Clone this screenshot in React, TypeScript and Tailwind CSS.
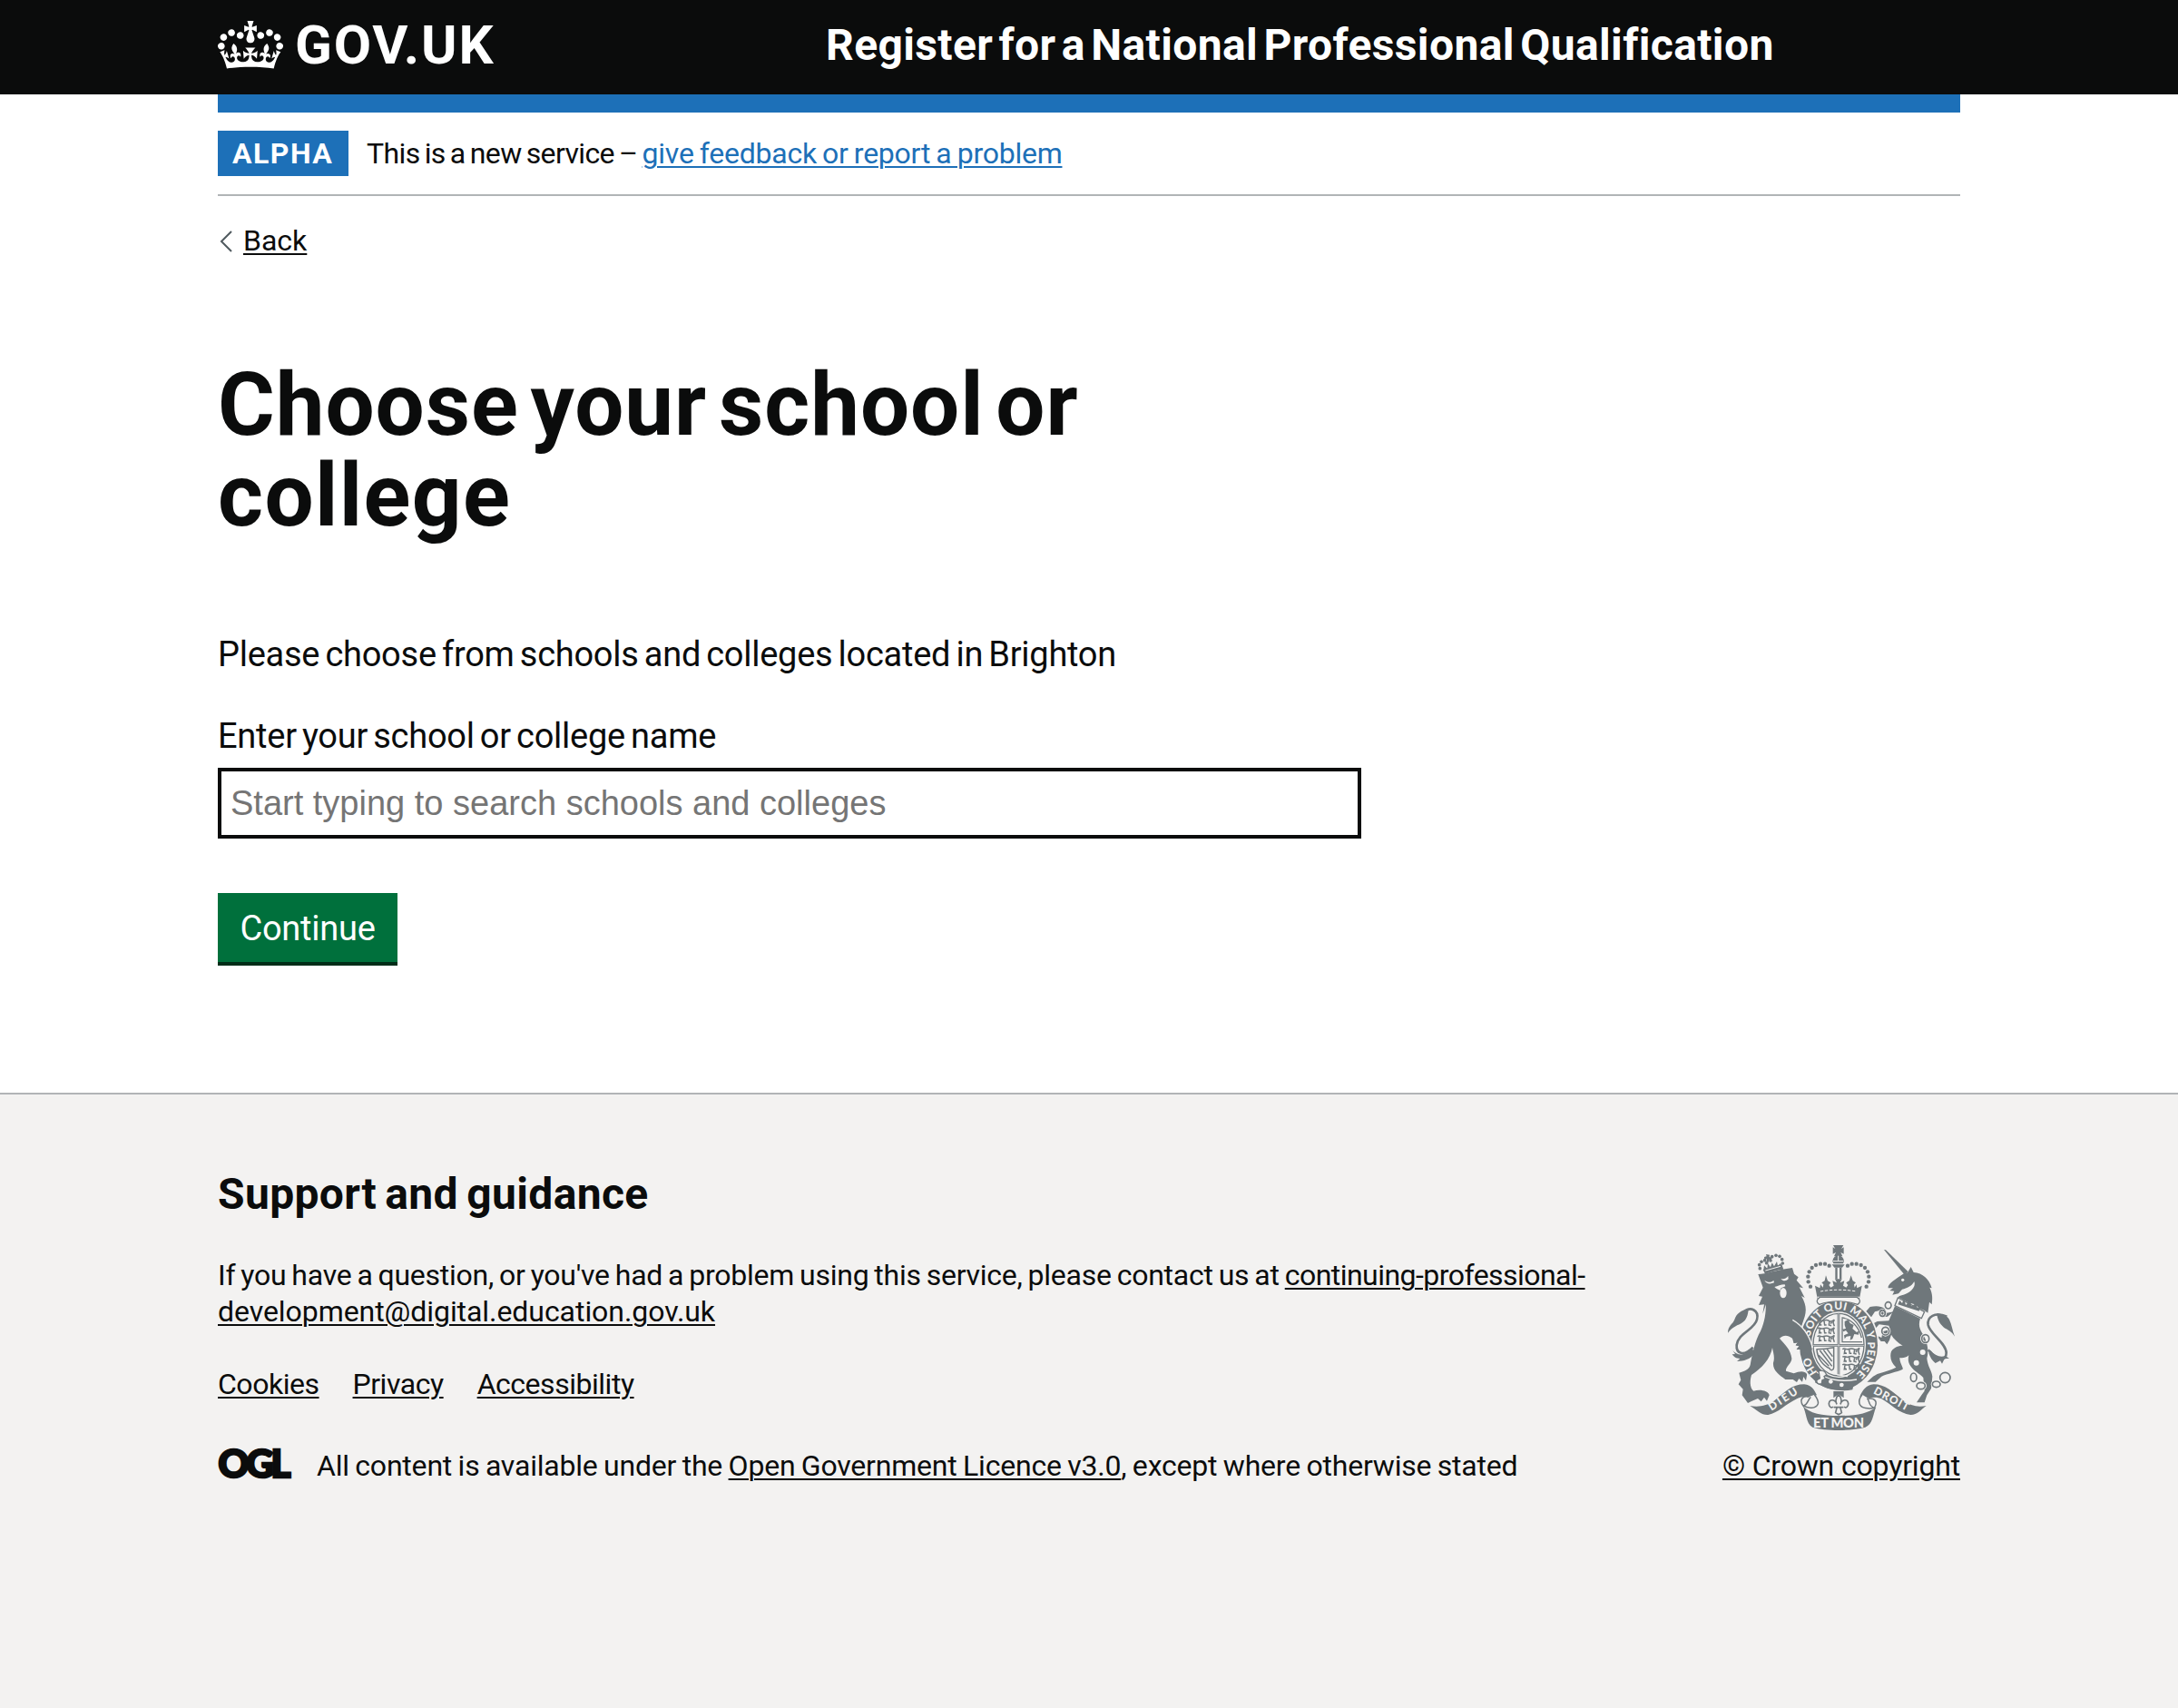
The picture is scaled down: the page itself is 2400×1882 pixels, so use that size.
import type { ReactNode } from "react";

const link = "underline decoration-2 underline-offset-[3px]";

function Crown() {
  return (
    <svg viewBox="0 0 132 97" className="mt-[3px] h-[53px] w-[72px] shrink-0 fill-white" aria-hidden="true">
      <path
        fillRule="evenodd"
        d="M25 30.2c3.5 1.5 7.7-.2 9.1-3.7 1.5-3.6-.2-7.8-3.9-9.2-3.6-1.4-7.6.3-9.1 3.9-1.4 3.5.3 7.5 3.9 9zM9 39.5c3.6 1.5 7.8-.2 9.2-3.7 1.5-3.6-.2-7.8-3.9-9.1-3.6-1.5-7.6.2-9.1 3.8-1.4 3.5.3 7.5 3.8 9zM4.4 57.2c3.5 1.5 7.7-.2 9.1-3.8 1.5-3.6-.2-7.7-3.9-9.1-3.5-1.5-7.6.3-9.1 3.8-1.4 3.5.3 7.6 3.9 9.1zm38.3-21.4c3.5 1.5 7.7-.2 9.1-3.8 1.5-3.6-.2-7.7-3.9-9.1-3.6-1.5-7.6.3-9.1 3.8-1.3 3.6.4 7.7 3.9 9.1zm64.4-5.6c-3.6 1.5-7.8-.2-9.1-3.7-1.5-3.6.2-7.8 3.8-9.2 3.6-1.4 7.7.3 9.2 3.9 1.3 3.5-.4 7.5-3.9 9zm15.9 9.3c-3.6 1.5-7.7-.2-9.1-3.7-1.5-3.6.2-7.8 3.7-9.1 3.6-1.5 7.7.2 9.2 3.8 1.5 3.5-.3 7.5-3.8 9zm4.7 17.7c-3.6 1.5-7.8-.2-9.2-3.8-1.5-3.6.2-7.7 3.9-9.1 3.6-1.5 7.7.3 9.2 3.8 1.3 3.5-.4 7.6-3.9 9.1zM89.3 35.8c-3.6 1.5-7.8-.2-9.2-3.8-1.4-3.6.2-7.7 3.9-9.1 3.6-1.5 7.7.3 9.2 3.8 1.4 3.6-.3 7.7-3.9 9.1zM69.7 17.7l8.9 4.7V9.3l-8.9 2.8c-.2-.3-.5-.6-.9-.9L72.4 0H59.6l3.5 11.2c-.3.3-.6.5-.9.9l-8.8-2.8v13.1l8.8-4.7c.3.3.6.7.9.9l-5 15.4v.1c-.2.8-.4 1.6-.4 2.4 0 4.1 3.1 7.5 7 8.1h.2c.3 0 .7.1 1 .1.4 0 .7 0 1-.1h.2c4-.6 7.1-4.1 7.1-8.1 0-.8-.1-1.7-.4-2.4V34l-5.1-15.4c.4-.2.7-.6 1-.9zM66 92.8c16.9 0 32.8 1.1 47.1 3.2 4-16.9 8.9-26.7 14-33.5l-9.6-3.4c1 4.9 1.1 7.2 0 10.2-1.5-1.4-3-4.3-4.2-8.7L108.6 76c2.8-2 5-3.2 7.5-3.3-4.4 9.4-10 11.9-13.6 11.2-4.3-.8-6.3-4.6-5.6-7.9 1-4.7 5.7-5.9 8-.5 4.3-8.7-3-11.4-7.6-8.8 7.1-7.2 7.9-13.5 2.1-21.1-8 6.1-8.1 12.3-4.5 20.8-4.7-5.4-12.1-2.5-9.5 6.2 3.4-5.2 7.9-2 7.2 3.1-.6 4.3-6.4 7.8-13.5 7.2-10.3-.9-10.9-8-11.2-13.8 2.5-.5 7.1 1.8 11 7.3L80.2 60c-4.1 4.4-8 5.3-12.3 5.4 1.4-4.4 8-11.6 8-11.6H55.5s6.4 7.2 7.9 11.6c-4.2-.1-8-1-12.3-5.4l1.4 16.4c3.9-5.5 8.5-7.7 10.9-7.3-.3 5.8-.9 12.8-11.1 13.8-7.2.6-12.9-2.9-13.5-7.2-.7-5 3.8-8.3 7.1-3.1 2.7-8.7-4.6-11.6-9.4-6.2 3.7-8.5 3.6-14.7-4.6-20.8-5.8 7.6-5 13.9 2.2 21.1-4.7-2.6-11.9.1-7.7 8.8 2.3-5.5 7.1-4.2 8.1.5.7 3.3-1.3 7.1-5.7 7.9-3.5.7-9-1.8-13.5-11.2 2.5.1 4.7 1.3 7.5 3.3l-4.7-15.4c-1.2 4.4-2.7 7.2-4.3 8.7-1.1-3-.9-5.3 0-10.2l-9.5 3.4c5 6.9 9.9 16.7 14 33.5 14.8-2.1 30.8-3.2 47.7-3.2z"
      />
    </svg>
  );
}

const archBeads: [number, number][] = [
  [345, 203], [338, 187], [337, 170], [341, 154], [350, 141], [363, 132], [378, 128], [393, 128], [407, 134],
];

const chainLinks: [number, number, number, number][] = [
  [602, 265, 10, 11], [583, 291, 9, 10], [593, 350, 12, 13], [725, 375, 12, 13], [686, 503, 10, 14],
  [710, 531, 14, 11], [761, 526, 13, 10], [790, 504, 17, 17],
];

function Lions({ x, y }: { x: number; y: number }) {
  return (
    <g transform={`translate(${x} ${y})`} fill="none" stroke="#6f777b" strokeWidth="4.5">
      {[0, 26, 52].map((dy) => (
        <path key={dy} d={`M2 ${dy + 4}c6 -6 12 2 18 0s14 -4 20 0 12 2 18 -4M10 ${dy + 4}l-2 14 6 -2M24 ${dy + 4}l2 14h6M42 ${dy + 4}l-2 14 8 2M58 ${dy}l-4 10 4 12M8 ${dy + 18}h8M50 ${dy + 8}l-4 6`} />
      ))}
    </g>
  );
}

function CoatOfArms() {
  const ink = "#6f777b";
  const paper = "#f3f2f1";
  return (
    <svg viewBox="72 66 750 612" className="h-[204px] w-[250px]" fill={ink} aria-hidden="true">
      {/* Lion's crown */}
      <path d="M188 147l62 -18 6 17c-22 2 -44 8 -60 17z" />
      <path d="M190 147l2 -14 10 10 2 -16 9 12 5 -15 7 12 9 -16 3 14 10 -9 2 13-56 16z" />
      {[[178, 143], [176, 131], [183, 121], [194, 116], [218, 104], [231, 100], [243, 103], [251, 113], [253, 126], [213, 117], [200, 125]].map(([x, y]) => (
        <circle key={`${x}-${y}`} cx={x} cy={y} r="5.5" />
      ))}
      <path d="M198 96l12 2 -1 7 9 2 -3 9 -7 -3 -2 10 -6 -1 1 -10 -8 2 -1 -9 8 -2z" />
      <path d="M196 150l50 -14" stroke={paper} strokeWidth="3" fill="none" />

      {/* Lion */}
      <path d="M172 162C196 162 232 148 285 141L291 161 305 172 299 182 321 208 308 205 326 240 315 234C331 262 332 280 326 302L316 332C335 348 345 378 349 408L338 427 326 418 318 428 312 411 299 411 307 400 296 397 303 388 290 390 285 374C270 362 255 362 243 374C262 396 280 412 283 440C284 456 262 468 264 482L290 490C308 482 325 480 334 492L330 514 322 501 318 518 307 507 300 519 287 510 262 510C240 494 220 480 222 455 228 438 222 422 219 405 212 442 185 472 150 495 143 520 146 540 157 548 180 541 206 548 209 562L201 581 192 569 182 583 171 573 150 582 138 588 119 562 122 542 107 526 115 512 109 488C128 482 142 478 146 462C152 428 162 380 180 350 195 318 197 290 198 262L187 293 192 262 174 264 186 236 174 234 188 206 180 184z" />
      <path d="M72 356c0 -24 16 -28 22 -44 6 -20 22 -32 46 -34 -2 20 -6 34 -20 44 -14 10 -32 12 -48 34z" />
      <path d="M122 288c26 -22 54 -6 46 24 -8 34 -62 44 -67 84 -2 28 22 40 54 8" fill="none" stroke={ink} strokeWidth="8" />
      <path d="M88 414c18 20 42 18 64 -10l8 20c-14 20 -36 26 -58 26l10 -9c-14 0 -20 -6 -26 -14l10 -1z" />
      <g fill={paper}>
        <path d="M193 182c12 8 22 8 30 0l2 8c-14 6 -26 4 -32 -8zM247 176c8 4 16 2 24 -8l1 10c-8 8 -18 8 -25 -2z" />
        <path d="M226 204c12 -2 20 -8 34 -8l2 6 -14 6 -4 8c-4 -4 -12 -4 -18 -12z" />
        <ellipse cx="255" cy="224" rx="11" ry="17" />
        <path d="M262 378l14 8 4 12 12 -6 -8 14z" />
      </g>

      {/* Imperial crown */}
      <path d="M420 66h34l-7 12 8 -5v22l-10 -5 6 13h-28l6 -13 -10 5V73l8 5z" />
      <path d="M418 119a19 19 0 0 1 38 0l-3 8h-32zM416 130h42l-8 10h-26z" />
      <path d="M437 101v18M420 119h34" stroke={paper} strokeWidth="3" />
      {archBeads.map(([x, y]) => (
        <g key={`${x}-${y}`}>
          <circle cx={x} cy={y} r="6.5" />
          <circle cx={875 - x} cy={y} r="6.5" />
        </g>
      ))}
      <path d="M427 140h7v38h-7zM441 140h7v38h-7z" />
      <path d="M368 243L360 200 376 208 378 196 386 206 388 196 382 190 392 184 396 166 402 184 412 190 406 198 412 206 422 200 418 184 432 190 426 178H449L443 190 457 184 453 200 463 206 469 198 463 190 473 184 479 166 485 184 495 190 489 196 491 206 497 196 499 208 515 200 507 243z" />
      <path d="M378 219c36 -7 84 -7 119 0" fill="none" stroke={paper} strokeWidth="3" strokeDasharray="10 5" />

      {/* Unicorn */}
      <path d="M588 81l6 1 74 72 -12 10z" />
      <path d="M654 160L666 157 677 138 686 156C716 158 738 178 746 208L739 206C750 228 748 246 746 262L738 254 733 290 722 282 706 276 690 262 668 256 634 238C642 230 660 232 678 216 688 206 692 196 688 186 680 202 664 208 648 212L636 226 616 230 622 218 607 216 618 208 602 208C598 196 626 178 654 160z" />
      <circle cx="650" cy="181" r="5" fill={paper} />
      <path d="M634 240L722 286 712 308 624 266z" fill={paper} stroke={ink} strokeWidth="4" />
      <path d="M634 262l6 -14 8 10 6 -16 6 22 8 -8 8 -8 2 20 10 -6 10 -8 -2 20 12 -4 -4 14z" />
      <path d="M624 268L708 309C702 326 704 340 714 356C730 380 738 412 730 440 732 466 746 480 748 500L744 540 730 562 722 586H696L712 562 722 548 718 504C702 488 688 484 676 466 666 452 668 440 670 430 660 440 646 440 640 438 640 458 652 468 650 476 630 486 600 490 580 500L560 518H532L552 500 566 492C590 484 612 478 628 470 612 456 606 436 612 418 620 402 640 398 650 398 634 388 620 376 612 362L606 380 598 394 590 384 578 384 562 364 580 372 584 352 608 344 604 332 572 328 556 346 542 344 550 326 566 318 604 316z" />
      <path d="M620 286L600 302 584 304 574 282 558 286 546 304 528 286 542 270C560 266 578 266 590 276L598 290z" />
      <circle cx="716" cy="420" r="9" fill={paper} />
      <circle cx="695" cy="455" r="9" fill={paper} />
      <path d="M822 368c-8 -20 -10 -40 -18 -56 -8 -14 -24 -20 -42 -20 4 22 10 34 24 46 12 8 26 12 36 30z" />
      <path d="M796 302c-40 -16 -66 0 -62 28 6 30 60 60 60 92 0 26 -24 30 -60 -10" fill="none" stroke={ink} strokeWidth="8" />
      <path d="M742 414c14 18 34 24 48 18l14 8 -16 2 -8 16 -6 -10 -16 8c-10 -8 -18 -20 -22 -34z" />
      <g fill="none" stroke={ink} strokeWidth="5">
        {chainLinks.map(([cx, cy, rx, ry]) => (
          <g key={`${cx}-${cy}`}>
            <ellipse cx={cx} cy={cy} rx={rx} ry={ry} stroke={paper} strokeWidth="10" />
            <ellipse cx={cx} cy={cy} rx={rx} ry={ry} />
          </g>
        ))}
      </g>

      {/* Garter */}
      <ellipse cx="438" cy="397" rx="134" ry="153" fill={paper} />
      <ellipse cx="438" cy="397" rx="129" ry="148" />
      <ellipse cx="438" cy="395" rx="90" ry="109" fill={paper} />
      <ellipse cx="438" cy="395" rx="84" ry="103" fill="none" stroke={ink} strokeWidth="4" />
      <path d="M366 236h143l-14 16c-36 -8 -80 -8 -115 0z" fill={paper} />
      <path d="M376 238h123c12 8 12 18 2 24c-40 -14 -88 -14 -127 0c-10 -6 -10 -16 2 -24z" fill={paper} stroke={ink} strokeWidth="4" />
      <path id="garter" d="M392 508A97 117 0 0 1 341 395A97 117 0 0 1 438 279A97 117 0 0 1 535 395A97 117 0 0 1 470 508" fill="none" />
      <text fill={paper} fontFamily="Lato" fontWeight="900" fontSize="36">
        <textPath href="#garter" startOffset="32">
          HO
          <tspan dx="68" letterSpacing="1.2">SOIT QUI MAL Y PENSE</tspan>
        </textPath>
      </text>
      <path d="M438 292v206M354 397h168" stroke={ink} strokeWidth="8" />
      <path d="M438 292v206M354 397h168" stroke={paper} strokeWidth="2" />
      <g>
        <Lions x={366} y={312} />
        <Lions x={449} y={406} />
        <path d="M450 304v82h66M448 306c30 2 58 30 66 66" fill="none" stroke={ink} strokeWidth="4" />
        <path d="M458 318l12 -6 6 12 12 6 -4 12 14 12 8 -6 -2 14 -14 -2 -6 16 -8 4 2 -14 -14 2 -6 8 -2 -12 14 -6 -8 -10 -8 4 -4 -8 12 -2 -4 -12z" />
        <path d="M364 410c14 0 40 -2 58 -6v66c0 10 -10 12 -14 4M366 412c2 26 18 52 44 62M376 414l40 52M388 412l28 38M400 410l18 24M372 430l34 36" fill="none" stroke={ink} strokeWidth="4.5" />
      </g>
      <path d="M290 320C322 332 342 368 350 410L338 430 326 420 318 430 312 411 299 411 307 400 296 397 303 388 290 390z" />
      <path d="M286 313c34 20 56 52 66 92" fill="none" stroke={paper} strokeWidth="4" />

      {/* Belt and buckle */}
      <path d="M366 490c36 22 70 34 124 28l-6 26c-44 8 -90 -4 -124 -24z" />
      <path d="M366 486c36 24 74 34 132 24M432 494l36 6" fill="none" stroke={paper} strokeWidth="4" />
      <circle cx="412" cy="517" r="7" fill={paper} />
      <circle cx="448" cy="528" r="7" fill={paper} />
      <path d="M372 482c12 -4 22 2 26 12l-8 6 4 8 -10 4 -2 12c-12 4 -18 -4 -16 -12l10 -6 -2 -12z" fill={paper} stroke={ink} strokeWidth="4" />

      {/* Fleur-de-lis */}
      <path d="M421 549h34v22l-17 -12 -17 12z" />
      <path d="M438 560c10 10 12 20 6 32 4 -16 24 -20 26 -2 0 10 -8 16 -14 10M438 560c-10 10 -12 20 -6 32 -4 -16 -24 -20 -26 -2 0 10 8 16 14 10M422 602h32M432 604l-4 16 10 6 10 -6 -4 -16" fill="none" stroke={ink} strokeWidth="5" />

      {/* Motto ribbon */}
      <path d="M145 597C172 602 202 598 226 580 262 550 284 526 324 526 350 528 358 546 366 562L340 568C326 566 312 568 300 574 262 592 240 620 205 627 182 628 172 614 145 597z" />
      <path d="M728 597C700 602 676 598 652 580 616 550 592 526 554 526 528 528 518 546 508 566L536 572C552 568 568 568 580 574 612 592 636 622 676 627 700 626 708 612 728 597z" />
      <path d="M340 568C318 562 308 578 320 596 336 606 364 608 370 590 372 580 366 570 358 560M346 568c-10 8 -8 24 -26 30" fill={paper} stroke={ink} strokeWidth="4.5" />
      <path d="M536 572C560 572 568 584 556 604 540 608 512 606 507 590 504 580 508 570 516 560M532 572c10 8 2 24 24 32" fill={paper} stroke={ink} strokeWidth="4.5" />
      <path d="M318 594C340 624 386 630 438 630 490 630 538 624 562 600 550 632 552 656 526 668 480 681 396 681 352 668 328 654 334 622 318 594z" />
      <g fill={paper} fontFamily="Lato" fontWeight="900" fontSize="44">
        <text x="354" y="669" textLength="168">ET MON</text>
        <text transform="translate(216 614) rotate(-33)" fontSize="36" textLength="106">DIEU</text>
        <text transform="translate(551 555) rotate(28)" fontSize="36" textLength="126">DROIT</text>
      </g>
    </svg>
  );
}

function OglLogo() {
  return (
    <svg viewBox="0 0 82 34" className="mt-px h-[34px] w-[82px] shrink-0 overflow-visible" role="img" aria-label="OGL">
      <text
        x="0.5"
        y="32"
        fontFamily="Lato"
        fontWeight="900"
        fontSize="42"
        textLength="80"
        lengthAdjust="spacing"
        fill="#0b0c0c"
        stroke="#0b0c0c"
        strokeWidth="2.6"
      >
        OGL
      </text>
    </svg>
  );
}

function FooterLink({ children }: { children: ReactNode }) {
  return <a className={link}>{children}</a>;
}

export default function App() {
  return (
    <div className="flex min-h-[1882px] flex-col bg-white font-['Roboto',sans-serif] text-[32px] leading-10 text-[#0b0c0c]">
      <header className="bg-[#0b0c0c]">
        <div className="mx-auto flex h-[104px] w-[1920px] items-start pt-5 text-white">
          <a className="flex w-[670px] items-start gap-[13px]">
            <Crown />
            <span className="text-[60px] leading-[60px] font-bold tracking-[1.8px]">GOV.UK</span>
          </a>
          <a className="text-5xl leading-[60px] font-bold tracking-[0.38px] [word-spacing:-6px]">
            Register for a National Professional Qualification
          </a>
        </div>
      </header>

      <div className="mx-auto w-[1920px]">
        <div className="h-5 bg-[#1d70b8]" />
        <div className="flex gap-5 border-b-2 border-[#b1b4b6] py-5 leading-[50px]">
          <strong className="w-36 bg-[#1d70b8] pl-4 font-bold tracking-[1.5px] text-white">ALPHA</strong>
          <p className="tracking-[-0.62px] [word-spacing:-2.2px]">
            This is a new service –{" "}
            <a className="tracking-[-0.25px] [word-spacing:-1.5px] text-[#1d70b8] underline decoration-2 underline-offset-[3px]">
              give feedback or report a problem
            </a>
          </p>
        </div>

        <a className="mt-[29px] flex items-start">
          <svg viewBox="0 0 14 24" className="mt-[9px] mr-[12px] ml-[2px] h-6 w-3.5" fill="none" stroke="#505a5f" strokeWidth="2">
            <path d="M13 1 2 12l11 11" />
          </svg>
          <span className={link}>Back</span>
        </a>

        <main className="pt-[111px]">
          <h1 className="w-[1260px] text-8xl leading-[100px] font-bold tracking-[0.95px] [word-spacing:-12px]">
            Choose your school or
            <br />
            <span className="tracking-[1.4px]">college</span>
          </h1>
          <div className="pt-[100px] text-[38px] leading-[50px] tracking-[-0.26px] [word-spacing:-3px]">
            <p>Please choose from schools and colleges located in Brighton</p>
            <label htmlFor="school" className="mt-10 block">
              Enter your school or college name
            </label>
            <input
              id="school"
              type="text"
              placeholder="Start typing to search schools and colleges"
              className="mt-[10px] block h-[78px] w-[1260px] border-4 border-[#0b0c0c] bg-white px-[10px] font-['Liberation_Sans',sans-serif] tracking-normal [word-spacing:0] placeholder:text-[#757575]"
            />
            <button className="mt-[60px] block h-20 w-[198px] border-b-4 border-[#002d18] bg-[#00703c] pt-px text-white">
              Continue
            </button>
          </div>
        </main>
      </div>

      <footer className="mt-[140px] grow border-t-2 border-[#b1b4b6] bg-[#f3f2f1] pt-20">
        <div className="mx-auto flex w-[1920px] items-end justify-between">
          <div>
            <h2 className="text-5xl leading-[60px] font-bold tracking-[0.35px] [word-spacing:-3px]">Support and guidance</h2>
            <p className="mt-[39px] tracking-[-0.25px] [word-spacing:-1.7px]">
              If you have a question, or you've had a problem using this service, please contact us at{" "}
              <a className={link}>
                <span className="tracking-[-0.54px]">continuing-professional-</span>
                <br />
                <span className="tracking-[-0.06px]">development@digital.education.gov.uk</span>
              </a>
            </p>
            <nav className="mt-10 flex gap-[37px] tracking-[-0.47px]">
              <FooterLink>Cookies</FooterLink>
              <FooterLink>Privacy</FooterLink>
              <FooterLink>Accessibility</FooterLink>
            </nav>
            <div className="mt-[50px] flex gap-[27px]">
              <OglLogo />
              <p className="tracking-[-0.2px] [word-spacing:-1.3px]">
                All content is available under the <FooterLink>Open Government Licence v3.0</FooterLink>, except where
                otherwise stated
              </p>
            </div>
          </div>
          <a className="flex flex-col items-center gap-[19px] tracking-[-0.17px]">
            <CoatOfArms />
            <span className={link}>© Crown copyright</span>
          </a>
        </div>
      </footer>
    </div>
  );
}
